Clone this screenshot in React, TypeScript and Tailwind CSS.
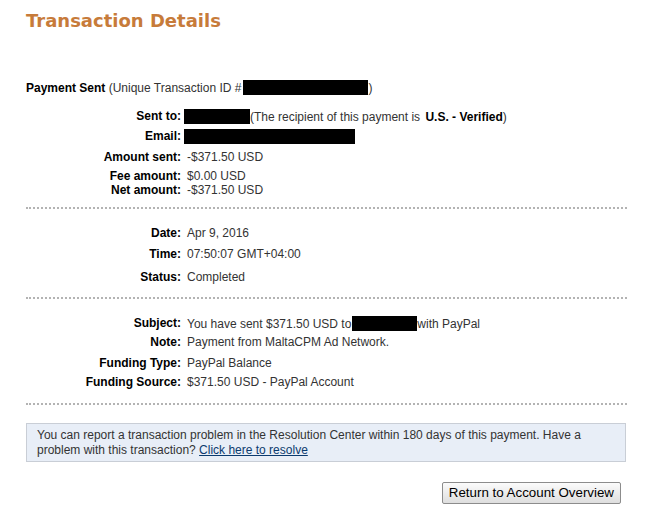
const Redact = ({ w, className = '' }: { w: string; className?: string }) => (
  <span className={`inline-block h-[15px] bg-black align-[-3px] ${w} ${className}`} />
);

function Row({ label, h, children }: { label: string; h: string; children: React.ReactNode }) {
  return (
    <div className={`flex ${h}`}>
      <div className="w-[155px] shrink-0 text-right font-bold text-black">{label}</div>
      <div className="ml-[6px] whitespace-nowrap">{children}</div>
    </div>
  );
}

const Dots = ({ mt }: { mt: string }) => (
  <div className={`${mt} border-t-2 border-dotted border-[#b3b3b3]`} />
);

export default function App() {
  return (
    <div className="w-[651px] h-[509px] bg-white font-['Liberation_Sans',Arial,sans-serif] text-[12px] leading-[14px] text-[#333]">
      <div className="w-[627px] pl-[26px]">
        <h1 className="pt-[11px] font-['DejaVu_Sans',sans-serif] text-[18px] font-bold leading-[20px] text-[#c77b3a]">
          Transaction Details
        </h1>

        <div className="mt-[49px] h-[14px] whitespace-nowrap">
          <span className="font-bold text-black">Payment Sent</span> (Unique Transaction ID #
          <Redact w="w-[125px]" className="ml-[2px]" />)
        </div>

        <div className="mt-[15px]">
          <Row label="Sent to:" h="h-[20px]">
            <Redact w="w-[66px]" className="-ml-[3px]" />
            (The recipient of this payment is{' '}
            <span className="ml-[2px] font-bold text-black">U.S. - Verified</span>)
          </Row>
          <Row label="Email:" h="h-[21px]">
            <Redact w="w-[171px]" className="-ml-[3px]" />
          </Row>
          <Row label="Amount sent:" h="h-[19px]">-$371.50 USD</Row>
          <Row label="Fee amount:" h="h-[14px]">$0.00 USD</Row>
          <Row label="Net amount:" h="h-[14px]">-$371.50 USD</Row>
        </div>
        <Dots mt="mt-[10px]" />

        <div className="mt-[17px]">
          <Row label="Date:" h="h-[21px]">Apr 9, 2016</Row>
          <Row label="Time:" h="h-[23px]">07:50:07 GMT+04:00</Row>
          <Row label="Status:" h="h-[14px]">Completed</Row>
        </div>
        <Dots mt="mt-[13px]" />

        <div className="mt-[17px]">
          <Row label="Subject:" h="h-[19px]">
            You have sent $371.50 USD to
            <Redact w="w-[65px]" className="ml-[1px]" />
            with PayPal
          </Row>
          <Row label="Note:" h="h-[21px]">Payment from MaltaCPM Ad Network.</Row>
          <Row label="Funding Type:" h="h-[19px]">PayPal Balance</Row>
          <Row label="Funding Source:" h="h-[14px]">$371.50 USD - PayPal Account</Row>
        </div>
        <Dots mt="mt-[14px]" />

        <div className="mt-[18px] w-[600px] border border-[#c9ced6] bg-[#e8eef7] px-[10px] pt-[4px] pb-[3px] leading-[15px] text-[#333]">
          You can report a transaction problem in the Resolution Center within 180 days of this payment. Have a
          <br />
          problem with this transaction?{' '}
          <a href="#" className="text-[#0b3a6e] underline">
            Click here to resolve
          </a>
        </div>

        <div className="mt-[20px] flex justify-end pr-[6px]">
          <button className="h-[22px] rounded-[2px] border border-[#8c8c8c] bg-linear-to-b from-[#fbfbfb] to-[#dedede] px-[6px] text-[13.33px] leading-[18px] text-black">
            Return to Account Overview
          </button>
        </div>
      </div>
    </div>
  );
}
